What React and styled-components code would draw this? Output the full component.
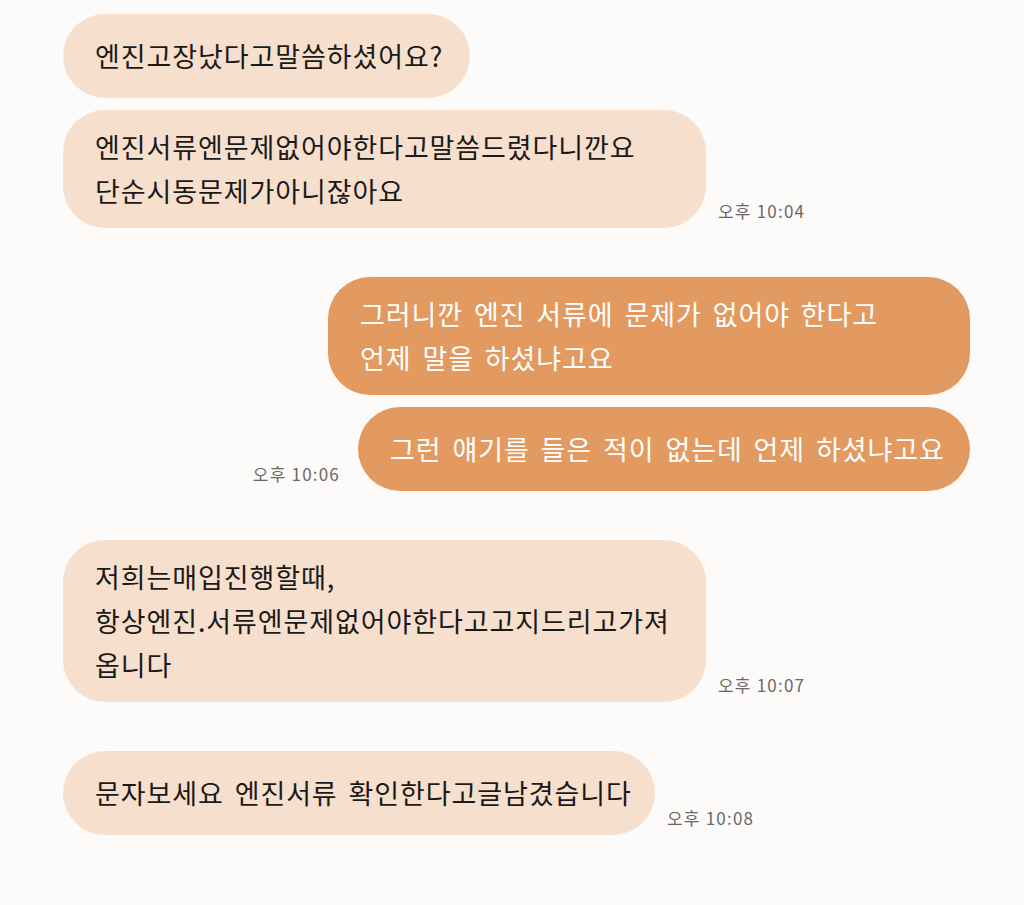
import React from "react";
import styled, { createGlobalStyle } from "styled-components";

const messages = [
  {
    id: 1,
    mine: false,
    width: 407,
    lines: ["엔진고장났다고말씀하셨어요?"],
  },
  {
    id: 2,
    mine: false,
    width: 643,
    lines: ["엔진서류엔문제없어야한다고말씀드렸다니깐요", "단순시동문제가아니잖아요"],
    time: "오후 10:04",
    last: true,
  },
  {
    id: 3,
    mine: true,
    width: 642,
    lines: ["그러니깐 엔진 서류에 문제가 없어야 한다고", "언제 말을 하셨냐고요"],
  },
  {
    id: 4,
    mine: true,
    width: 612,
    lines: ["그런 얘기를 들은 적이 없는데 언제 하셨냐고요"],
    time: "오후 10:06",
    last: true,
  },
  {
    id: 5,
    mine: false,
    width: 643,
    lines: ["저희는매입진행할때,", "항상엔진.서류엔문제없어야한다고고지드리고가져", "옵니다"],
    time: "오후 10:07",
    last: true,
  },
  {
    id: 6,
    mine: false,
    width: 592,
    lines: ["문자보세요 엔진서류 확인한다고글남겼습니다"],
    time: "오후 10:08",
    last: true,
  },
];

function App() {
  return (
    <>
      <GlobalStyle />
      <ChatList>
        {messages.map((m) => (
          <MessageRow key={m.id} mine={m.mine} last={m.last}>
            {m.mine && m.time ? <Time mine>{m.time}</Time> : undefined}
            <Bubble mine={m.mine} style={{ width: m.width }}>
              <span>
                {m.lines.map((line, i) => (
                  <React.Fragment key={i}>
                    {i > 0 ? <br /> : undefined}
                    {line}
                  </React.Fragment>
                ))}
              </span>
            </Bubble>
            {!m.mine && m.time ? <Time>{m.time}</Time> : undefined}
          </MessageRow>
        ))}
      </ChatList>
    </>
  );
}
export default App;

const FONT = `"Noto Sans CJK KR", "Noto Sans", sans-serif`;

const COLOR = {
  page: "#fcfbf9",
  other: "#f6dfcd",
  mine: "#e29a60",
  text: "#1c1a19",
  time: "#6b6866",
};

const GlobalStyle = createGlobalStyle`
  html, body {
    margin: 0;
    padding: 0;
    background: ${COLOR.page};
  }
  body {
    font-family: ${FONT};
  }
`;

const ChatList = styled.div`
  display: flex;
  flex-direction: column;
  padding: 14px 54px 40px 63px;
  min-height: 905px;
  box-sizing: border-box;
`;

const MessageRow = styled.div`
  display: flex;
  align-items: flex-end;
  justify-content: ${(props) => (props.mine ? "flex-end" : "flex-start")};
  gap: 12px;
  margin-bottom: ${(props) => (props.last ? "49px" : "12px")};
`;

const Bubble = styled.div`
  display: flex;
  align-items: center;
  box-sizing: border-box;
  min-height: 84px;
  padding: 15px 24px 15px 32px;
  border-radius: 42px;
  background-color: ${(props) => (props.mine ? COLOR.mine : COLOR.other)};
  color: ${(props) => (props.mine ? "#ffffff" : COLOR.text)};
  font-size: 27px;
  line-height: 44px;
  letter-spacing: 0.9px;
  word-spacing: 4px;
  white-space: nowrap;
`;

const Time = styled.span`
  margin: 0 ${(props) => (props.mine ? "6px" : "0")} 6px 0;
  font-size: 17px;
  line-height: 22px;
  letter-spacing: 1.2px;
  color: ${COLOR.time};
  white-space: nowrap;
`;
